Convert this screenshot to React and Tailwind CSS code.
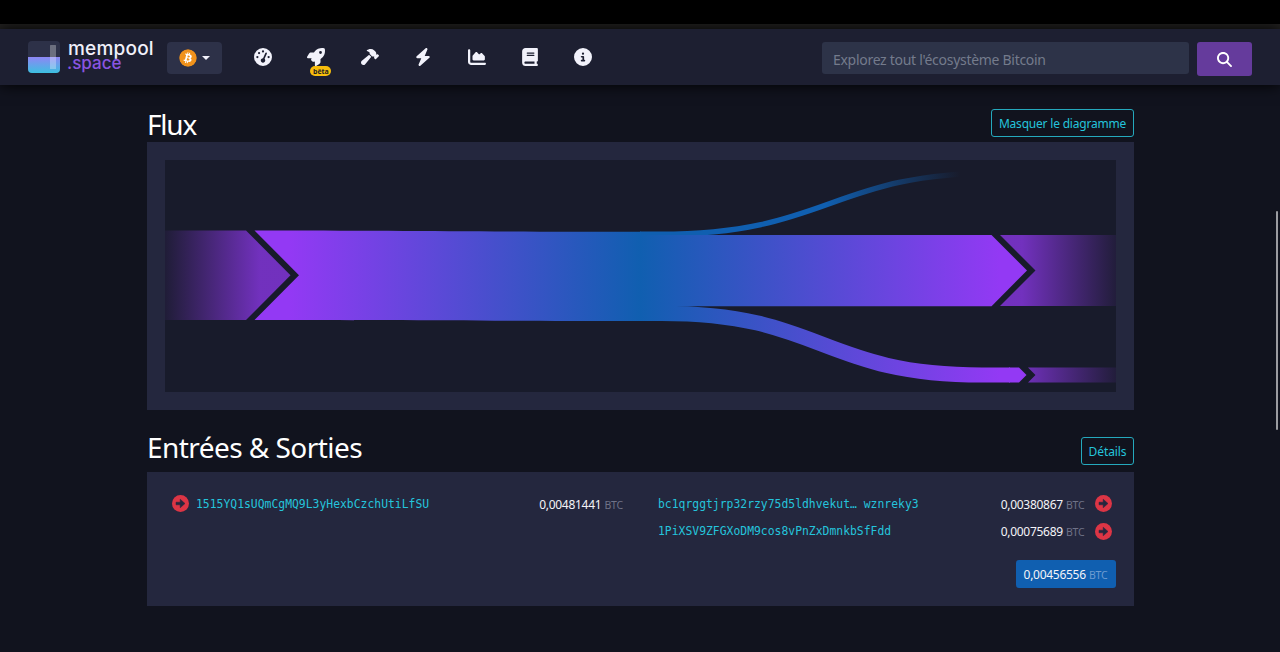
import {
  FaGaugeHigh,
  FaRocket,
  FaHammer,
  FaBolt,
  FaChartArea,
  FaBook,
  FaCircleInfo,
  FaMagnifyingGlass,
  FaBitcoin,
} from 'react-icons/fa6';

const navIcons = [
  { Icon: FaGaugeHigh, id: 'dashboard' },
  { Icon: FaRocket, id: 'accelerator', badge: 'bêta' },
  { Icon: FaHammer, id: 'mining' },
  { Icon: FaBolt, id: 'lightning' },
  { Icon: FaChartArea, id: 'graphs' },
  { Icon: FaBook, id: 'docs' },
  { Icon: FaCircleInfo, id: 'about' },
];

function Logo() {
  return (
    <div className="flex w-[139px] items-start">
      <svg width="32" height="32" viewBox="0 0 32 32" className="mt-px shrink-0">
        <defs>
          <linearGradient id="logoFill" x1="0" y1="0" x2="0" y2="1">
            <stop offset="0" stopColor="#8f86f5" />
            <stop offset="1" stopColor="#3cc0e0" />
          </linearGradient>
          <clipPath id="logoClip">
            <rect width="32" height="32" rx="4" />
          </clipPath>
        </defs>
        <g clipPath="url(#logoClip)">
          <rect width="32" height="32" fill="#2d3148" />
          <rect y="16" width="32" height="16" fill="url(#logoFill)" />
          <rect x="22" y="4" width="6" height="24" rx="0.5" fill="#fff" fillOpacity="0.3" />
        </g>
      </svg>
      <div className="ml-[7px] whitespace-nowrap font-['Inter',sans-serif]">
        <div className="pl-px text-[19px] font-medium leading-[17px] tracking-[0.2px] text-[#f0f0fa]">mempool</div>
        <div className="text-[17px] font-medium leading-[13px] text-[#8a55e0]">.space</div>
      </div>
    </div>
  );
}

function Navbar() {
  return (
    <header className="relative z-10 flex h-[56px] shrink-0 items-start bg-[#1d1f31] pl-7 pr-7 pt-[11px] shadow-[0_0_14px_0_#000]">
      <Logo />
      <button className="mt-[2px] flex h-[32px] w-[55px] items-center justify-center gap-[5px] rounded bg-[#2d3148]">
        <FaBitcoin className="size-[18px] rounded-full bg-[radial-gradient(circle,#fff_52%,transparent_54%)] text-[#f0921c]" />
        <svg width="8" height="4" viewBox="0 0 8 4">
          <path d="M0 0H8L4 4Z" fill="#f2f2fb" />
        </svg>
      </button>
      <nav className="ml-[31px] flex gap-[33.4px] pt-[8px]">
        {navIcons.map(({ Icon, id, badge }) => (
          <div key={id} className="relative flex w-5 justify-center">
            <Icon className="size-[18px] text-[#f2f2fb]" />
            {badge && (
              <span className="absolute left-[4px] top-[18px] flex h-[10px] w-[21px] items-center justify-center rounded-full bg-[#f8bd0c] font-['Open_Sans',sans-serif] text-[7px] font-bold leading-none text-[#222]">
                {badge}
              </span>
            )}
          </div>
        ))}
      </nav>
      <div className="ml-auto flex gap-2">
        <div className="mt-[2px] flex h-[32px] w-[367px] items-center rounded-[3px] bg-[#2d3348] pl-[11px] pt-[2px] text-[14px] tracking-[-0.29px] text-[#747b8c]">
          Explorez tout l'écosystème Bitcoin
        </div>
        <button className="mt-[2px] flex h-[34px] w-[55px] items-center justify-center rounded-[3px] bg-[#653b9c]">
          <FaMagnifyingGlass className="size-[15px] text-white" />
        </button>
      </div>
    </header>
  );
}

function OutlineButton({ children, className }) {
  return (
    <button
      className={`flex h-[28px] items-center justify-center whitespace-nowrap rounded-[3px] border border-[#25a9bd] pt-[2px] text-[12px] text-[#24c4dc] ${className}`}
    >
      {children}
    </button>
  );
}

function FlowDiagram() {
  return (
    <svg width="951" height="232" viewBox="165 160 951 232" className="block bg-[#181b2b]">
      <defs>
        <linearGradient id="inFlow" gradientUnits="userSpaceOnUse" x1="290" y1="0" x2="640" y2="0">
          <stop offset="0" stopColor="#9339f4" />
          <stop offset="1" stopColor="#105fb0" />
        </linearGradient>
        <linearGradient id="outFlow" gradientUnits="userSpaceOnUse" x1="640" y1="0" x2="1000" y2="0">
          <stop offset="0" stopColor="#105fb0" />
          <stop offset="1" stopColor="#9339f4" />
        </linearGradient>
        <linearGradient id="feeFlow" gradientUnits="userSpaceOnUse" x1="640" y1="0" x2="960" y2="0">
          <stop offset="0" stopColor="#105fb0" />
          <stop offset="0.58" stopColor="#105fb0" />
          <stop offset="1" stopColor="#105fb0" stopOpacity="0" />
        </linearGradient>
        <linearGradient id="inFade" gradientUnits="userSpaceOnUse" x1="165" y1="0" x2="260" y2="0">
          <stop offset="0" stopColor="#9339f4" stopOpacity="0.06" />
          <stop offset="1" stopColor="#9339f4" stopOpacity="0.73" />
        </linearGradient>
        <linearGradient id="outFade" gradientUnits="userSpaceOnUse" x1="1022" y1="0" x2="1116" y2="0">
          <stop offset="0" stopColor="#9339f4" stopOpacity="0.73" />
          <stop offset="1" stopColor="#9339f4" stopOpacity="0.08" />
        </linearGradient>
      </defs>
      <path d="M165 230.5H246L290.5 275.2L246 320H165Z" fill="url(#inFade)" />
      <path
        d="M254.5 230.5C400 230.5 500 231.8 641 231.8V321C500 321 400 320 254.5 320L299 275.2Z"
        fill="url(#inFlow)"
      />
      <path d="M640 234.2H660C830 234.2 830 172.8 1000 172.8" fill="none" stroke="url(#feeFlow)" strokeWidth="5.2" />
      <path d="M640 235H991.5L1027 270.5L991.5 306.2H640Z" fill="url(#outFlow)" />
      <path d="M640 313.3H662C822 313.3 822 375 982 375H1010" fill="none" stroke="url(#outFlow)" strokeWidth="15.2" />
      <path d="M1009 367.5H1019L1026.5 375L1019 382.5H1009Z" fill="url(#outFlow)" />
      <path d="M1000 235H1116V306H1000L1035.5 270.5Z" fill="url(#outFade)" />
      <path d="M1028 367.5H1116V382.5H1028L1035.5 375Z" fill="url(#outFade)" />
    </svg>
  );
}

function ArrowBadge({ className }) {
  return (
    <svg width="17" height="17" viewBox="0 0 17 17" className={`shrink-0 ${className}`}>
      <circle cx="8.5" cy="8.5" r="8.5" fill="#dc3545" />
      <path d="M4 7.2H8.2V4.2L13 8.5L8.2 12.8V9.8H4Z" fill="#24273e" stroke="#24273e" strokeWidth="0.5" strokeLinejoin="round" />
    </svg>
  );
}

function Amount({ value, unitClass = 'text-[#6f7287]' }) {
  return (
    <span className="whitespace-nowrap text-[12px] text-[#f4f4f8]">
      <span className="tracking-[-0.28px]">{value}</span>{' '}
      <span className={`text-[10.5px] tracking-[-0.2px] ${unitClass}`}>BTC</span>
    </span>
  );
}

function Address({ children }) {
  return (
    <span className="whitespace-pre pt-px font-['DejaVu_Sans_Mono',monospace] text-[11.4px] text-[#24c4dc]">
      {children}
    </span>
  );
}

function OutputRow({ address, value }) {
  return (
    <div className="flex h-[27.5px] items-center">
      <Address>{address}</Address>
      <span className="ml-auto pb-[2px]">
        <Amount value={value} />
      </span>
      <ArrowBadge className="ml-[10.5px] mr-[4px]" />
    </div>
  );
}

export default function App() {
  return (
    <div className="flex h-[652px] w-[1280px] flex-col overflow-hidden bg-[#11131e] font-['Noto_Sans',sans-serif]">
      <div className="h-6 shrink-0 bg-black" />
      <div className="h-[5px] shrink-0 bg-[#222120]" />
      <Navbar />
      <div className="flex">
        <main className="ml-[147px] w-[987px]">
          <div className="flex h-[57px] items-start justify-between pt-[24px]">
            <h2 className="-mt-px text-[28px] leading-[32px] tracking-[-1.2px] text-white">Flux</h2>
            <OutlineButton className="w-[143px] tracking-[-0.2px]">Masquer le diagramme</OutlineButton>
          </div>
          <section className="h-[268px] bg-[#24273e] px-[18px] pt-[18px]">
            <FlowDiagram />
          </section>
          <div className="flex h-[62px] items-start justify-between pt-[22px]">
            <h2 className="-mt-px text-[28px] leading-[32px] tracking-[-0.55px] text-white">Entrées &amp; Sorties</h2>
            <OutlineButton className="mt-[5px] w-[53px] tracking-[-0.1px]">Détails</OutlineButton>
          </div>
          <section className="h-[134px] bg-[#24273e] pl-[25px] pr-[18px] pt-[18px]">
            <div className="flex justify-between">
              <div className="flex h-[27.5px] w-[451px] items-center">
                <ArrowBadge className="mr-[7px]" />
                <Address>1515YQ1sUQmCgMQ9L3yHexbCzchUtiLfSU</Address>
                <span className="ml-auto pb-[2px]">
                  <Amount value="0,00481441" />
                </span>
              </div>
              <div className="w-[458px]">
                <OutputRow address="bc1qrggtjrp32rzy75d5ldhvekut… wznreky3" value="0,00380867" />
                <OutputRow address="1PiXSV9ZFGXoDM9cos8vPnZxDmnkbSfFdd" value="0,00075689" />
              </div>
            </div>
            <div className="mt-[15px] flex justify-end">
              <div className="mr-[0.5px] flex h-[28px] w-[100px] items-center justify-center rounded-[3px] bg-[#105fb0] pt-[2px]">
                <Amount value="0,00456556" unitClass="text-[#6d9bd0]" />
              </div>
            </div>
          </section>
        </main>
        <div className="ml-auto flex w-[4px] pt-[126px]">
          <div className="h-[219px] w-[2px] rounded bg-[#9b9ca1]" />
        </div>
      </div>
    </div>
  );
}
